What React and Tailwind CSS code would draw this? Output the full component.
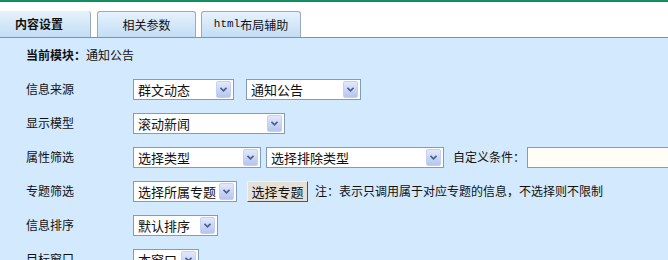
import React from 'react';

const Arrow = () => (
  <span className="flex h-[17px] w-[15px] shrink-0 items-center justify-center rounded-[2px] border border-[#c4d2f2] bg-gradient-to-b from-[#e2e9fc] to-[#b4c5ef]">
    <svg width="7" height="5" viewBox="0 0 7 5">
      <path d="M0.5 0.8 L3.5 3.8 L6.5 0.8" fill="none" stroke="#4a5d8a" strokeWidth="1.6" />
    </svg>
  </span>
);

const Sel = ({ w, text }) => (
  <div className={`flex h-[21px] shrink-0 items-center justify-between border border-[#7f9db9] bg-white pl-[4px] pr-[2px] text-[13px] leading-none whitespace-nowrap text-[#111] ${w}`}>
    <span>{text}</span>
    <Arrow />
  </div>
);

const Row = ({ label, children }) => (
  <div className="flex h-[34px] items-center whitespace-nowrap">
    <div className="w-[107px] shrink-0 text-[12px]">{label}</div>
    {children}
  </div>
);

const App = () => {
  return (
    <div className="h-[260px] w-[668px] overflow-hidden bg-white text-[#111]" style={{ fontFamily: '"Noto Sans CJK SC", "Liberation Sans", sans-serif' }}>
      {/* 标签页 */}
      <div className="flex h-[37px] items-end gap-[6px] border-t-2 border-[#11905f]">
        <div className="flex h-[26px] w-[91px] shrink-0 items-center rounded-tr-[3px] border-r border-[#9aaaba] bg-gradient-to-b from-[#e6f2fd] to-[#c3ddf4] pl-[15px] text-[12px] font-bold">
          内容设置
        </div>
        <div className="flex h-[26px] w-[99px] shrink-0 items-center justify-center rounded-t-[3px] border border-b-0 border-[#9aaaba] bg-gradient-to-b from-[#e6f2fd] to-[#c3ddf4] text-[12px]">
          相关参数
        </div>
        <div className="ml-[-1px] flex h-[26px] w-[100px] shrink-0 items-center justify-center rounded-t-[3px] border border-b-0 border-[#9aaaba] bg-gradient-to-b from-[#e6f2fd] to-[#c3ddf4] text-[12px]">
          <span className="text-[11px]" style={{ fontFamily: '"Liberation Mono", monospace' }}>html</span>布局辅助
        </div>
      </div>

      {/* 内容面板 */}
      <div className="h-[223px] overflow-hidden border-t border-[#7f93a6] bg-[#d3e9fd] pl-[26px]">
        <div className="flex h-[34px] items-center text-[12px]">
          <span className="font-bold">当前模块：</span>通知公告
        </div>

        <Row label="信息来源">
          <Sel w="w-[101px]" text="群文动态" />
          <div className="w-[12px] shrink-0" />
          <Sel w="w-[115px]" text="通知公告" />
        </Row>

        <Row label="显示模型">
          <Sel w="w-[152px]" text="滚动新闻" />
        </Row>

        <Row label="属性筛选">
          <Sel w="w-[128px]" text="选择类型" />
          <div className="w-[5px] shrink-0" />
          <Sel w="w-[178px]" text="选择排除类型" />
          <span className="ml-[9px] shrink-0 text-[12px]">自定义条件：</span>
          <div className="ml-[2px] h-[21px] w-[160px] shrink-0 border border-[#7f9db9] bg-[#fffdf5]" />
        </Row>

        <Row label="专题筛选">
          <Sel w="w-[104px]" text="选择所属专题" />
          <button className="ml-[10px] flex h-[21px] w-[61px] shrink-0 items-center justify-center border border-t-[#f4f2ee] border-l-[#f4f2ee] border-r-[#555] border-b-[#555] bg-[#e5e1d9] text-[13px] leading-none">
            选择专题
          </button>
          <span className="ml-[7px] shrink-0 text-[12px]">注：表示只调用属于对应专题的信息，不选择则不限制</span>
        </Row>

        <Row label="信息排序">
          <Sel w="w-[85px]" text="默认排序" />
        </Row>

        <Row label="目标窗口">
          <Sel w="w-[66px]" text="本窗口" />
        </Row>
      </div>
    </div>
  );
};

export default App;
